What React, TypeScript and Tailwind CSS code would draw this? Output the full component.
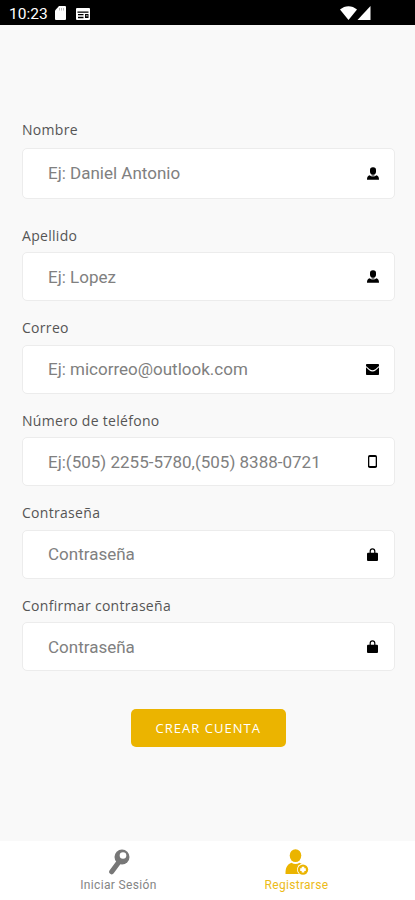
import * as React from "react";

type IconProps = { className?: string };

const UserIcon = ({ className }: IconProps) => (
  <svg viewBox="0 0 12 13" className={className} fill="currentColor">
    <rect x="3" y="0.2" width="6" height="7.3" rx="2.8" />
    <path d="M0 12.7c0-2.5.6-3.9 2.9-4.5C3.8 9.2 4.800 9.600 6 9.600s2.200-.4 3.100-1.400c2.300.6 2.900 2 2.900 4.500z" />
    <path d="M4.600 7h2.800v2L6 9.800 4.600 9z" opacity="0.5" />
  </svg>
);

const MailIcon = ({ className }: IconProps) => (
  <svg viewBox="0 0 13 11" className={className}>
    <rect width="13" height="11" rx="0.8" fill="currentColor" />
    <path
      d="M0 2.6 3.5 5.8Q6.5 8 9.5 5.8L13 2.6"
      fill="none"
      stroke="#fff"
      strokeWidth="1.1"
    />
  </svg>
);

const PhoneIcon = ({ className }: IconProps) => (
  <svg viewBox="0 0 9 13" className={className}>
    <rect width="9" height="13" rx="1.8" fill="currentColor" />
    <rect x="1.3" y="2" width="6.4" height="9" rx="0.4" fill="#fff" />
  </svg>
);

const LockIcon = ({ className }: IconProps) => (
  <svg viewBox="0 0 11 13" className={className}>
    <path
      d="M3.2 6V3.2a2.3 2.3 0 0 1 4.6 0V6"
      fill="none"
      stroke="currentColor"
      strokeWidth="1.2"
    />
    <rect y="4.8" width="11" height="8.2" rx="1" fill="currentColor" />
  </svg>
);

const KeyIcon = ({ className }: IconProps) => (
  <svg viewBox="0 0 22 26" className={className}>
    <path
      d="M10.5 13.5 3.7 22.8"
      stroke="currentColor"
      strokeWidth="5"
      strokeLinecap="round"
    />
    <circle cx="14" cy="8" r="7.5" fill="currentColor" />
    <circle cx="15" cy="6.5" r="3.3" fill="#fff" />
  </svg>
);

const UserAddIcon = ({ className }: IconProps) => (
  <svg viewBox="0 0 24 26" className={className}>
    <ellipse cx="10.5" cy="6.6" rx="5.8" ry="6.4" fill="currentColor" />
    <path
      d="M.5 25c0-6.500 1.500-9.500 6-11.300 2.500 1.800 5.500 1.800 8 0 3 1.200 4.500 3 5.200 6V25z"
      fill="currentColor"
    />
    <circle cx="18" cy="20.6" r="6" fill="#fff" />
    <circle cx="18" cy="20.6" r="5.2" fill="currentColor" />
    <path d="M18 17.8v5.6M15.2 20.6h5.6" stroke="#fff" strokeWidth="2.6" />
  </svg>
);

const fields = [
  { id: "apellido", label: "Apellido", placeholder: "Ej: Lopez", type: "text", icon: <UserIcon className="h-[13px] w-3" /> },
  { id: "correo", label: "Correo", placeholder: "Ej: micorreo@outlook.com", type: "email", icon: <MailIcon className="h-[11px] w-[13px]" /> },
  { id: "telefono", label: "Número de teléfono", placeholder: "Ej:(505) 2255-5780,(505) 8388-0721", type: "tel", icon: <PhoneIcon className="h-[13px] w-[9px]" /> },
  { id: "clave", label: "Contraseña", placeholder: "Contraseña", type: "password", icon: <LockIcon className="h-[13px] w-[11px]" /> },
  { id: "confirmar", label: "Confirmar contraseña", placeholder: "Contraseña", type: "password", icon: <LockIcon className="h-[13px] w-[11px]" /> },
];

type FieldProps = {
  id: string;
  label: string;
  placeholder: string;
  type: string;
  icon: React.ReactNode;
  large?: boolean;
};

const Field = ({ id, label, placeholder, type, icon, large }: FieldProps) => (
  <div className={large ? "mb-[27px]" : "mb-[17px]"}>
    <label
      htmlFor={id}
      className={
        "block font-['Open_Sans',sans-serif] text-sm leading-5 tracking-[0.3px] text-[#555] " +
        (large ? "mb-2" : "mb-[6.5px]")
      }
    >
      {label}
    </label>
    <div
      className={
        "flex items-center rounded-[5px] border border-[#ececec] bg-white pr-[9px] pl-[25px] " +
        (large ? "h-[51px]" : "h-[49px]")
      }
    >
      <input
        id={id}
        type={type}
        placeholder={placeholder}
        className="min-w-0 flex-1 pt-0.5 font-[Roboto,sans-serif] text-[17px] outline-none placeholder:text-[#808080]"
      />
      <span className="flex w-6 justify-center text-black">{icon}</span>
    </div>
  </div>
);

const StatusBar = () => (
  <header className="flex h-[25px] items-center bg-black pr-11 pl-[9px] text-white">
    <span className="mt-0.5 w-[38px] font-[Roboto,sans-serif] text-[15.5px] leading-5">10:23</span>
    <svg viewBox="0 0 11 14" className="mt-px ml-2 h-3.5 w-[11px]" fill="currentColor">
      <path d="M4 0h6a1 1 0 0 1 1 1v12a1 1 0 0 1-1 1H1a1 1 0 0 1-1-1V4.5z" />
      <path d="M4.5 2v2.5M6.5 2v2.5M8.5 2v2.5" stroke="#aaa" strokeWidth="0.8" />
    </svg>
    <svg viewBox="0 0 14 12" className="mt-0.5 ml-2.5 h-3 w-3.5">
      <rect width="14" height="12" rx="1" fill="currentColor" />
      <path d="M1.5 4.2h11M2 6.7h5.5M2 9.5h5.5" stroke="#000" strokeWidth="1.3" />
      <path d="M9 6h3.5v4H9z" fill="#000" />
      <path d="M9.8 7h2v1.5h-2z" fill="#888" />
    </svg>
    <svg viewBox="0 0 17 14" className="mt-px ml-auto h-3.5 w-[17px]" fill="currentColor">
      <path d="M8.5 14 0 3.500C5-1 12-1 17 3.500z" />
    </svg>
    <svg viewBox="0 0 14 14" className="mt-px h-3.5 w-3.5" fill="currentColor">
      <path d="M13.500 0v14H.5z" />
    </svg>
  </header>
);

const App = () => {
  const [tab, setTab] = React.useState("registro");

  return (
    <div className="flex h-[900px] w-full flex-col overflow-hidden bg-[#f9f9f9]">
      <StatusBar />
      <form className="flex-1 pt-[94.5px] pr-[20.5px] pl-[22px]" onSubmit={(e) => e.preventDefault()}>
        <Field
          id="nombre"
          label="Nombre"
          placeholder="Ej: Daniel Antonio"
          type="text"
          icon={<UserIcon className="h-[13px] w-3" />}
          large
        />
        {fields.map((field) => (
          <Field key={field.id} {...field} />
        ))}
        <button
          type="submit"
          className="mx-auto mt-[38px] block h-[38px] w-[155px] rounded-[5px] bg-[#ebb400] pt-0.5 font-['Open_Sans',sans-serif] text-[13px] tracking-[1.05px] text-white"
        >
          CREAR CUENTA
        </button>
      </form>
      <nav className="flex h-[59px] justify-center bg-white font-[Roboto,sans-serif] text-xs">
        <button
          className={
            "flex w-[178px] flex-col items-center pt-2 " +
            (tab === "login" ? "text-[#ebb400]" : "text-[#777]")
          }
          onClick={() => setTab("login")}
        >
          <KeyIcon className="h-[26px] w-[22px]" />
          <span className="mt-0.5 leading-4 tracking-[0.35px] opacity-90">Iniciar Sesión</span>
        </button>
        <button
          className={
            "flex w-[178px] flex-col items-center pt-2 " +
            (tab === "registro" ? "text-[#ebb400]" : "text-[#777]")
          }
          onClick={() => setTab("registro")}
        >
          <UserAddIcon className="h-[26px] w-6" />
          <span className="mt-0.5 leading-4 tracking-[0.3px] opacity-90">Registrarse</span>
        </button>
      </nav>
    </div>
  );
};

export default App;
